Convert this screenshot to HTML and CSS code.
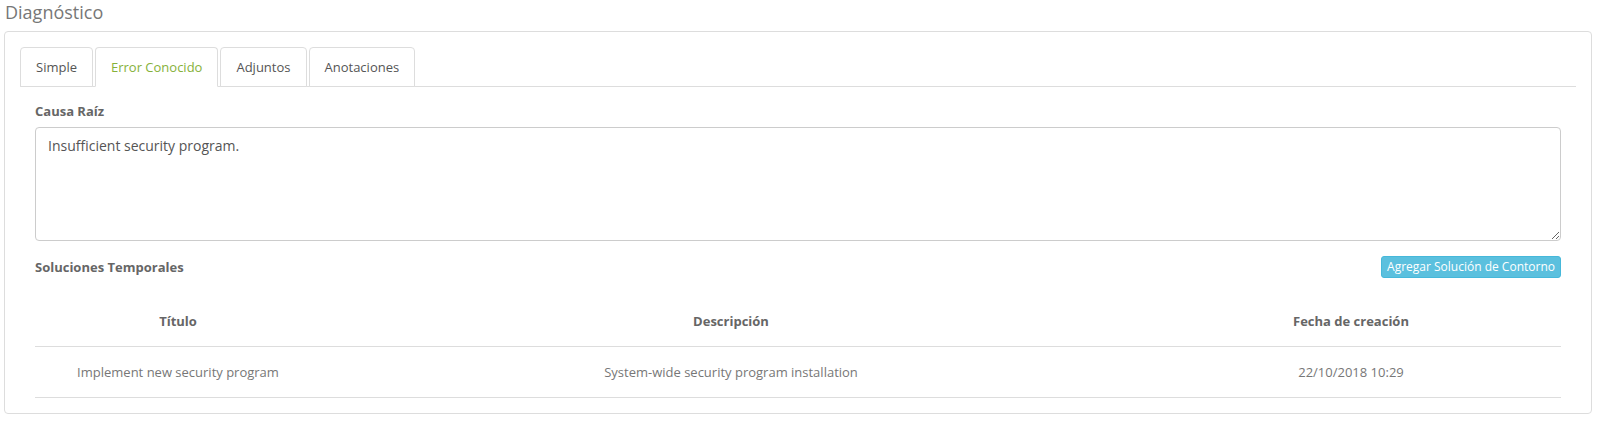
FILE: index.html
```html
<!DOCTYPE html>
<html lang="es">
<head>
<meta charset="utf-8">
<title>Diagnóstico</title>
<link rel="stylesheet" href="styles.css">
</head>
<body>
<h4 class="page-title">Diagnóstico</h4>
<div class="panel">
  <ul class="tabs">
    <li class="tab">Simple</li>
    <li class="tab active">Error Conocido</li>
    <li class="tab">Adjuntos</li>
    <li class="tab">Anotaciones</li>
  </ul>
  <div class="tab-content">
    <label class="field-label">Causa Raíz</label>
    <textarea class="field-text">Insufficient security program.</textarea>
    <div class="section-head">
      <span class="field-label inline">Soluciones Temporales</span>
      <button class="btn-info">Agregar Solución de Contorno</button>
    </div>
    <table class="grid">
      <thead>
        <tr>
          <th class="c1">Título</th>
          <th class="c2">Descripción</th>
          <th class="c3">Fecha de creación</th>
        </tr>
      </thead>
      <tbody>
        <tr>
          <td>Implement new security program</td>
          <td>System-wide security program installation</td>
          <td>22/10/2018 10:29</td>
        </tr>
      </tbody>
    </table>
  </div>
</div>
</body>
</html>
```

FILE: styles.css
```css
* { box-sizing: border-box; }
body {
  margin: 0;
  font-family: "Open Sans", "Liberation Sans", sans-serif;
  font-size: 13px;
  color: #666;
  background: #fff;
}
.page-title {
  margin: 0 0 7px 0;
  padding: 0 0 0 5px;
  font-size: 18px;
  font-weight: 400;
  line-height: 24px;
  color: #777;
}
.panel {
  margin: 0 10px 0 4px;
  border: 1px solid #ddd;
  border-radius: 4px;
  padding: 15px;
  background: #fff;
}
.tabs {
  list-style: none;
  margin: 0;
  padding: 0;
  display: flex;
  border-bottom: 1px solid #ddd;
}
.tab {
  margin-right: 2px;
  margin-bottom: -1px;
  padding: 10px 15px;
  line-height: 18px;
  font-size: 13px;
  color: #555;
  border: 1px solid #ddd;
  border-radius: 4px 4px 0 0;
  background: #fff;
}
.tab.active {
  color: #86b13a;
  border-bottom-color: #fff;
}
.tab-content {
  padding: 15px 15px 0 15px;
}
.field-label {
  display: block;
  font-weight: 700;
  font-size: 13px;
  line-height: 18px;
  color: #666;
  margin-bottom: 7px;
}
.field-label.inline {
  margin: 0 0 1px 0;
}
.field-text {
  display: block;
  width: 100%;
  height: 114px;
  padding: 8px 12px;
  font-family: "Open Sans", "Liberation Sans", sans-serif;
  font-size: 14px;
  line-height: 20px;
  color: #555;
  border: 1px solid #ccc;
  border-radius: 4px;
  resize: vertical;
  margin: 0;
}
.section-head {
  display: flex;
  align-items: center;
  justify-content: space-between;
  margin-top: 15px;
}
.btn-info {
  font-family: "Open Sans", "Liberation Sans", sans-serif;
  font-size: 12px;
  line-height: 18px;
  padding: 1px 5px;
  color: #fff;
  background: #5bc0de;
  border: 1px solid #46b8da;
  border-radius: 3px;
  cursor: pointer;
}
.grid {
  width: 100%;
  border-collapse: collapse;
  margin-top: 18px;
  table-layout: fixed;
}
.grid th, .grid td {
  text-align: center;
  padding: 16px 8px;
  line-height: 18px;
  border-bottom: 1px solid #ddd;
}
.grid th {
  font-weight: 700;
  color: #666;
  font-size: 13px;
}
.grid td {
  color: #777;
  font-size: 13px;
}
.c1 { width: 286px; }
.c2 { width: 820px; }
.c3 { width: 420px; }
```
